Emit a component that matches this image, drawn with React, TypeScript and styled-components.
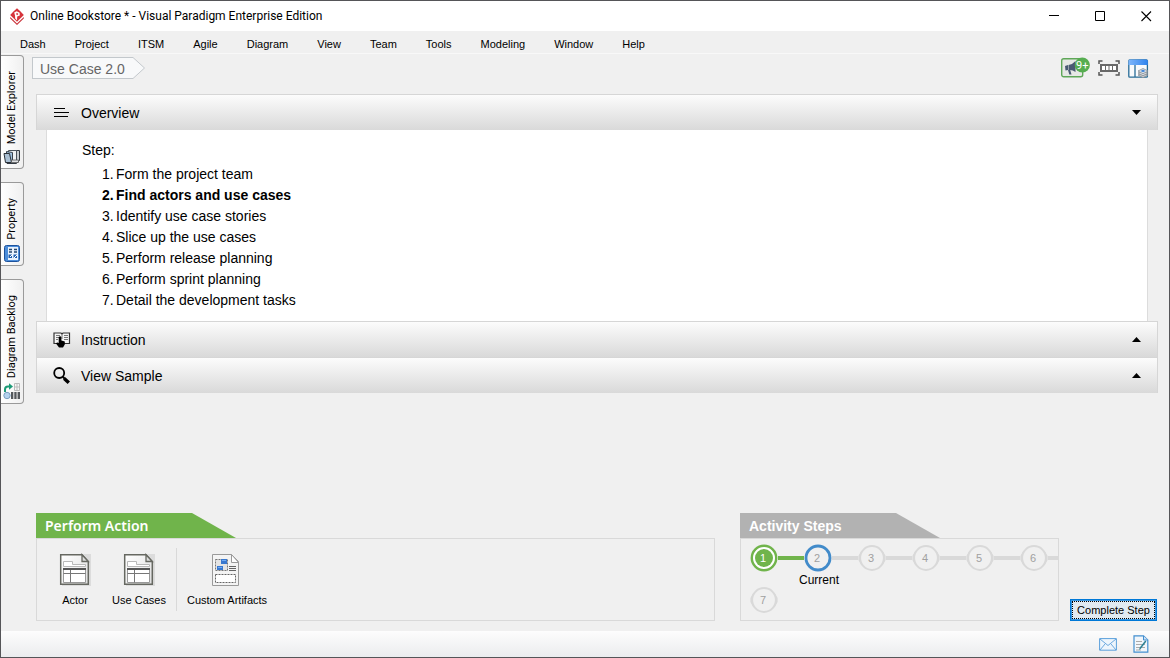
import React, { useState } from "react";
import styled, { createGlobalStyle, css } from "styled-components";

const GlobalStyle = createGlobalStyle`
  *, *::before, *::after { box-sizing: border-box; }
  body {
    margin: 0;
    background: #f0f0f0;
    color: #000;
    font-family: "Liberation Sans", Arial, sans-serif;
    font-size: 11px;
  }
  button { font: inherit; color: inherit; }
  svg { flex: none; }
`;

const Window = styled.div`
  display: flex;
  flex-direction: column;
  min-height: 100vh;
  border: 1px solid #555558;
  background: #f0f0f0;
`;

const TitleBar = styled.header`
  display: flex;
  align-items: center;
  height: 30px;
  padding-left: 8px;
  background: #fff;
`;

const Title = styled.h1`
  flex: 1;
  margin: 0 0 0 5px;
  font: 400 12px/16px Roboto, "Segoe UI", sans-serif;
`;

const WindowButton = styled.button`
  display: grid;
  place-items: center;
  width: 46px;
  height: 28px;
  padding: 0;
  border: 0;
  background: none;
`;

const MenuBar = styled.nav`
  display: flex;
  gap: 29px;
  height: 23px;
  padding-left: 19px;
  border-bottom: 1px solid #f8f8f8;
`;

const MenuItem = styled.button`
  padding: 3px 0 0;
  border: 0;
  background: none;
  line-height: 16px;
`;

const Body = styled.div`
  display: flex;
  flex: 1;
`;

const SideBar = styled.aside`
  display: flex;
  flex-direction: column;
  align-items: flex-start;
  gap: 13px;
  width: 23px;
  padding-top: 1px;
`;

const SideTab = styled.button`
  display: flex;
  flex-direction: column;
  align-items: center;
  gap: 5px;
  width: 23px;
  padding: 15px 2px 3px;
  border: 1px solid #9a9a9a;
  border-left: 0;
  border-radius: 0 4px 4px 0;
  background: linear-gradient(to right, #fff, #f0f0f0);
`;

const SideLabel = styled.span`
  writing-mode: vertical-rl;
  transform: rotate(180deg);
  font: 400 11px/16px Roboto, Tahoma, sans-serif;
`;

const Main = styled.main`
  display: flex;
  flex: 1;
  flex-direction: column;
  min-width: 0;
  padding: 0 11px 10px 12px;
`;

const ToolBar = styled.div`
  display: flex;
  justify-content: space-between;
  height: 40px;
  margin-left: -4px;
  padding: 3px 9px 0 0;
`;

const Crumb = styled.a`
  display: flex;
  height: 22px;
  color: #666;
  font-size: 14px;
  line-height: 22px;
  text-decoration: none;
`;

const CrumbText = styled.span`
  padding: 0 7px;
  border: 1px solid #c3c8cc;
  border-right: 0;
  background: #f8f9fa;
`;

const Tools = styled.div`
  display: flex;
  gap: 8px;
`;

const ToolButton = styled.button`
  display: flex;
  align-items: center;
  height: 24px;
  padding: 0;
  border: 0;
  background: none;
`;

const SectionHeader = styled.button`
  display: flex;
  align-items: center;
  width: 100%;
  height: 36px;
  padding: 0 16px;
  border: 1px solid #d6d6d6;
  border-bottom: 0;
  background: linear-gradient(#fcfcfc, #d9d9d9);
  font-size: 14px;
  text-align: left;
`;

const SectionTitle = styled.span`
  flex: 1;
  padding-left: 10px;
`;

const SectionBody = styled.div`
  margin: 0 10px;
  padding: 10px 35px;
  border: solid #dcdcdc;
  border-width: 0 1px;
  background: #fff;
  font-size: 14px;
  line-height: 21px;
`;

const StepHeading = styled.p`
  margin: 0 0 3px;
`;

const StepNames = styled.ol`
  margin: 0;
  padding: 0 0 0 20px;
  list-style: none;
`;

const StepName = styled.li<{ $current?: boolean }>`
  display: flex;
  font-weight: ${(p) => (p.$current ? 700 : 400)};
`;

const StepIndex = styled.span`
  width: 14px;
`;

const BottomArea = styled.div`
  display: flex;
  align-items: flex-end;
  margin-top: auto;
  padding: 24px 1px 0 0;
`;

const Group = styled.section<{ $grow?: boolean }>`
  min-width: 0;
  ${(p) =>
    p.$grow
      ? css`
          flex: 1;
          margin-right: 25px;
        `
      : css`
          flex: 0 0 319px;
          margin-right: 11px;
        `}
`;

const GroupTab = styled.h2<{ $active?: boolean }>`
  width: 200px;
  height: 25px;
  margin: 0;
  padding-left: 9px;
  clip-path: polygon(0 0, 156px 0, 200px 100%, 0 100%);
  background: ${(p) => (p.$active ? "#70b44b" : "#b2b2b2")};
  color: #fff;
  font: ${(p) =>
    p.$active
      ? '600 14px/25px "Noto Sans", sans-serif'
      : '700 14px/26px "Liberation Sans", sans-serif'};
`;

const GroupBox = styled.div`
  display: flex;
  height: 83px;
  border: 1px solid #d9d9d9;
`;

const Actions = styled(GroupBox)`
  padding: 9px 6px;
`;

const Action = styled.button`
  display: flex;
  flex-direction: column;
  align-items: center;
  gap: 6px;
  min-width: 64px;
  padding: 5px 5px 0;
  border: 0;
  background: none;
  line-height: 14px;
  white-space: nowrap;
`;

const Divider = styled.span`
  width: 1px;
  margin: 0 5px;
  background: #d9d9d9;
`;

const Progress = styled.ol`
  display: grid;
  grid-template-columns: repeat(6, 54px);
  grid-auto-rows: 42px;
  height: 83px;
  margin: 0;
  padding: 5px 0 0 9px;
  overflow: hidden;
  border: 1px solid #d9d9d9;
  list-style: none;
`;

const ProgressStep = styled.li`
  display: flex;
`;

const Marker = styled.div`
  display: flex;
  flex-direction: column;
  align-items: center;
  width: 28px;
`;

const Disc = styled.div`
  display: grid;
  place-items: center;
  flex: none;
  width: 28px;
  height: 28px;

  > * {
    grid-area: 1 / 1;
  }
`;

const Number = styled.span<{ $done?: boolean }>`
  padding-right: 2px;
  color: ${(p) => (p.$done ? "#fff" : "#a0a0a0")};
`;

const Caption = styled.span`
  padding-left: 2px;
  font-size: 12px;
  line-height: 16px;
`;

const Link = styled.span<{ $done?: boolean }>`
  flex: 1;
  height: 4px;
  margin-top: 12px;
  background: ${(p) => (p.$done ? "#70b44b" : "#d9d9d9")};
`;

const CompleteButton = styled.button`
  width: 87px;
  height: 22px;
  padding: 0;
  border: 1px solid #0078d7;
  box-shadow: inset 0 0 0 1px #3c98e0;
  outline: 1px dotted #000;
  outline-offset: -3px;
  background: #e1eaf1;
  white-space: nowrap;
`;

const StatusBar = styled.footer`
  display: flex;
  align-items: center;
  justify-content: flex-end;
  gap: 16px;
  height: 26px;
  padding-right: 20px;
  background: linear-gradient(#fdfdfd, #ebecee);
`;

const StatusButton = styled.button`
  display: flex;
  padding: 0;
  border: 0;
  background: none;
`;

const Logo = () => (
  <svg width="16" height="17" viewBox="0 0 16 17" aria-hidden="true">
    <path d="M8 .3 11.8 3.8 14.8 7 8 13.8 1.2 7 4.2 3.8Z" fill="#d6333a" />
    <path d="M1.2 9 8 15.6 14.8 9V10.4L8 17 1.2 10.4Z" fill="#c92f36" />
    <path d="M5.2 4.6 7.6 3.2 10.6 4.8 10.8 7.6 8.2 8.6 8 12.6 6.2 10.6 6 7.4Z" fill="#fff" />
    <path d="M8 4.8 9.4 6 8.2 7.2 7 6Z" fill="#d6333a" />
  </svg>
);

const ExplorerIcon = () => (
  <svg width="18" height="16" viewBox="0 0 18 16" aria-hidden="true">
    <path d="M7 1.5H16.5V11.5L13.5 14.5H4Z" fill="#c9cdd1" stroke="#333a42" />
    <path d="M5.5 1.5H13.5V11.5H5.5Z" fill="#eef1f4" stroke="#4a525b" />
    <path d="M3.5 2.5 9.5 3.5V12.5L3.5 11Z" fill="#9fc0dd" stroke="#39424c" />
    <path d="M1 4.5H6.5L8.5 13.5H2.5Z" fill="#a9bfd3" stroke="#2b3138" />
    <path d="M8.5 11H15.5V13.5H8.5Z" fill="#dfe2e5" stroke="#555" strokeWidth=".8" />
  </svg>
);

const PropertyIcon = () => (
  <svg width="16" height="17" viewBox="0 0 16 17" aria-hidden="true">
    <rect x=".5" y=".5" width="15" height="16" rx="2" fill="#4c8edb" stroke="#1d529c" />
    <path d="M4 2H14V15H4Z" fill="#e9f2fd" />
    <path d="M5 4.5H8M10 4.5H13M5 7H8M10 7H13" stroke="#24466e" strokeWidth="1.3" />
    <path d="M4.5 9.5H8V13H4.5ZM9.5 9.5H13V13H9.5Z" fill="#2160b0" />
    <path d="m6 12 3-3M10 13l3-3" stroke="#fff" />
  </svg>
);

const BacklogIcon = () => (
  <svg width="18" height="17" viewBox="0 0 18 17" aria-hidden="true">
    <path d="M11.5.5H16.5V7.5H11.5ZM14 .5V7.5M11.5 4H16.5" fill="#f5f5f5" stroke="#bbb" />
    <path d="M2 9V6.5Q2 3.5 5 3.5H7" fill="none" stroke="#1b9a76" strokeWidth="2" />
    <path d="M6 .3 10 3.5 6 6.7Z" fill="#1b9a76" />
    <circle cx="4" cy="12.5" r="3.2" fill="#b4d2ee" stroke="#7d9fc0" />
    <path d="M8 9H10.3V16H8ZM11.3 9H13.6V16H11.3ZM14.6 9H17V16H14.6Z" fill="#55585c" />
  </svg>
);

const AnnounceIcon = () => (
  <svg width="30" height="24" viewBox="0 0 30 24" aria-hidden="true">
    <rect x="1.7" y="1.8" width="21" height="18" rx="2" fill="#e6e8e5" stroke="#5fa758" strokeWidth="1.4" />
    <path d="M5 9 8 8V13L5.5 13.5Z" fill="#4a5a73" />
    <path d="M8.5 8Q12.5 7.5 15.5 4V15Q12.5 12.5 8.5 13Z" fill="#4a5a73" />
    <path d="M8 13 10.2 13 11.5 17.5H9.3Z" fill="#4a5a73" />
    <circle cx="22.3" cy="8" r="7.6" fill="#56ad50" />
    <text x="16" y="12" fontSize="11" fontFamily="Roboto, sans-serif" fill="#fff">9+</text>
  </svg>
);

const FitIcon = () => (
  <svg width="22" height="18" viewBox="0 0 22 18" aria-hidden="true">
    <path d="M1 4V1H4.5M17.5 1H21V4M21 12V15H17.5M4.5 15H1V12" fill="none" stroke="#555" strokeWidth="1.5" />
    <rect x="2" y="4" width="18" height="8" fill="#686868" />
    <path d="M4 6H7V10H4ZM8 6H10.5V10H8ZM11.5 6H14V10H11.5ZM15 6H18V10H15Z" fill="#fff" />
  </svg>
);

const LayoutIcon = () => (
  <svg width="21" height="20" viewBox="0 0 21 20" aria-hidden="true">
    <defs>
      <linearGradient id="layoutTop" x1="0" x2="1">
        <stop stopColor="#7eb6fb" />
        <stop offset="1" stopColor="#2e83ee" />
      </linearGradient>
    </defs>
    <rect x=".8" y="1" width="18.6" height="17.2" rx="1" fill="#f8fafc" stroke="#276c97" strokeWidth="1.3" />
    <path d="M.5 2Q.5.5 2 .5H18Q19.8.5 19.8 2V6H.5Z" fill="url(#layoutTop)" />
    <path d="M7 6V18" stroke="#276c97" strokeWidth="1.3" />
    <path d="m10 16 5 2.7 5-2.7-5-2.2Z" fill="#c7cbd0" stroke="#848a91" strokeWidth=".8" />
    <path d="m10 14 5 2.7 5-2.7-5-2.2Z" fill="#d9dde1" stroke="#848a91" strokeWidth=".8" />
    <path d="m10 12 5 2.7 5-2.7-5-2.5Z" fill="#e3e8ed" stroke="#848a91" strokeWidth=".8" />
    <path d="m12.5 12 2.5 1.2 2.5-1.2L15 10.5Z" fill="#4587d8" />
  </svg>
);

const LinesIcon = () => (
  <svg width="18" height="18" viewBox="0 0 18 18" aria-hidden="true">
    <path d="M1 4.5H12M1 8.5H16M1 12.5H15" stroke="#000" />
  </svg>
);

const InstructionIcon = () => (
  <svg width="18" height="18" viewBox="0 0 18 18" aria-hidden="true">
    <path d="M1 2H8L9 3 10 2H16.5V12.5H1Z" fill="#f5f5f5" stroke="#333" strokeWidth="1.2" />
    <path d="M9 3V8M3 4.5H7M3 6.5H6M3 8.5H5M11 4.5H15M11 6.5H15M11 8.5H15" stroke="#777" />
    <path d="M5.7 6Q7.2 4.5 8.4 6V9.5L11.8 10.5V13.5L10 16.5H6L3 12.5Q4 10.6 5.7 12Z" fill="#000" />
  </svg>
);

const SearchIcon = () => (
  <svg width="18" height="18" viewBox="0 0 18 18" aria-hidden="true">
    <circle cx="6.2" cy="6" r="5" fill="none" stroke="#000" strokeWidth="1.8" />
    <path d="m9.8 9.8 2 2" stroke="#000" strokeWidth="2" />
    <path d="m11.2 11.4 4.6 4.4" stroke="#000" strokeWidth="3.4" />
  </svg>
);

const Arrow = ({ open }: { open?: boolean }) => (
  <svg width="9" height="5" viewBox="0 0 9 5" aria-hidden="true">
    <path d={open ? "M0 0H9L4.5 5Z" : "M0 5H9L4.5 0Z"} fill="#000" />
  </svg>
);

const FormIcon = () => (
  <svg width="32" height="34" viewBox="0 0 32 34" aria-hidden="true">
    <defs>
      <linearGradient id="formSheet" x1="0" x2="1" y2="1">
        <stop stopColor="#fff" />
        <stop offset="1" stopColor="#dedede" />
      </linearGradient>
    </defs>
    <path d="M3 1H32V33H3Z" fill="#dcdcdc" />
    <path d="M1.7 1.7H23L29.3 8.5V31.3H1.7Z" fill="url(#formSheet)" stroke="#666861" strokeWidth="1.5" />
    <path d="M23 1.7V8.5H29.3Z" fill="#ddd" stroke="#666861" strokeWidth="1.3" />
    <path d="M4.5 8.5H13.5V11.5H26.5V13.5H4.5Z" fill="#fff" stroke="#b8b8b8" />
    <path d="M4.5 15.5H26.5V29.5H4.5Z" fill="#fff" stroke="#999" />
    <path d="M4 16H27" stroke="#555" strokeWidth="2" />
    <path d="M4.5 20.5H26.5M11.5 17V29.5" stroke="#777" />
  </svg>
);

const ArtifactIcon = () => (
  <svg width="32" height="34" viewBox="2 0 32 34" aria-hidden="true">
    <path d="M3.5 1.5H22.5L29.5 8.5V32.5H3.5Z" fill="#f4f4f4" stroke="#9a9a9a" />
    <path d="M22.5 1.5V9.5H29.5Z" fill="#fff" stroke="#9a9a9a" />
    <path d="M6.5 6.5H18.5V17.5H6.5Z" fill="#e4e4e4" stroke="#777" strokeDasharray="2 1" />
    <path d="M12 6H18V11H12ZM8 13H14V17H8Z" fill="#3978ce" />
    <path d="M13 7H17V8H13ZM9 14H13V15H9Z" fill="#70aaf3" />
    <path d="M20 13.5H27M20 15.5H27M20 17.5H27" stroke="#666" />
    <path d="M6.5 21.5H26.5V29.5H6.5Z" fill="#fff" stroke="#666" strokeDasharray="2 1" />
  </svg>
);

const MailIcon = () => (
  <svg width="18" height="13" viewBox="0 0 18 13" aria-hidden="true">
    <path d="M.6.6H17.4V12.2H.6Z" fill="#eef5fc" stroke="#5b9fdb" />
    <path d="m1 1 8 6.5L17 1M1 12 6 6M17 12l-5-6" fill="none" stroke="#5b9fdb" strokeWidth=".9" />
  </svg>
);

const NoteIcon = () => (
  <svg width="16" height="18" viewBox="0 0 16 18" aria-hidden="true">
    <path d="M1 .8H10.5L14.8 5V17.2H1Z" fill="#f1f6fb" stroke="#438fd0" strokeWidth="1.2" />
    <path d="M10.5 1V5H14.8" fill="#cfe3f5" stroke="#438fd0" />
    <path d="M3 6.5H9M3 9.5H12M3 12.5H12M3 15H8" stroke="#aaa" />
    <path d="m6 15 .8-2.6 5.4-7L13.4 6.4 8 13.4Z" fill="#2b8093" />
  </svg>
);

type StepState = "done" | "current" | "pending";

const Ring = ({ state }: { state: StepState }) => (
  <svg width="28" height="28" viewBox="0 0 28 28" aria-hidden="true">
    {state === "done" && (
      <>
        <circle cx="14" cy="14" r="12.2" fill="#fff" stroke="#70b44b" strokeWidth="2.4" />
        <circle cx="14" cy="14" r="9" fill="#70b44b" />
      </>
    )}
    {state === "current" && (
      <circle cx="14" cy="14" r="12" fill="#f0f0f0" stroke="#428bca" strokeWidth="2.8" />
    )}
    {state === "pending" && (
      <>
        <path d="M.4 12 3.5 6.5V21.5L.4 16ZM27.6 12 24.5 6.5V21.5L27.6 16Z" fill="#d9d9d9" />
        <circle cx="14" cy="14" r="11.9" fill="#f0f0f0" stroke="#d9d9d9" strokeWidth="2" />
      </>
    )}
  </svg>
);

const menus = ["Dash", "Project", "ITSM", "Agile", "Diagram", "View", "Team", "Tools", "Modeling", "Window", "Help"];

const steps = [
  "Form the project team",
  "Find actors and use cases",
  "Identify use case stories",
  "Slice up the use cases",
  "Perform release planning",
  "Perform sprint planning",
  "Detail the development tasks",
];

const currentStep = 1;

const stateOf = (i: number): StepState =>
  i < currentStep ? "done" : i === currentStep ? "current" : "pending";

export default function App() {
  const [overviewOpen, setOverviewOpen] = useState(true);

  return (
    <>
      <GlobalStyle />
      <Window>
        <TitleBar>
          <Logo />
          <Title>Online Bookstore * - Visual Paradigm Enterprise Edition</Title>
          <WindowButton aria-label="Minimize">
            <svg width="11" height="11"><path d="M0 4.5H10" stroke="#000" /></svg>
          </WindowButton>
          <WindowButton aria-label="Maximize">
            <svg width="11" height="11"><path d="M.5.5H9.5V9.5H.5Z" fill="none" stroke="#000" /></svg>
          </WindowButton>
          <WindowButton aria-label="Close">
            <svg width="11" height="11"><path d="m.5.5 9.5 9.5M10 .5.5 10" stroke="#000" strokeWidth="1.1" /></svg>
          </WindowButton>
        </TitleBar>

        <MenuBar>
          {menus.map((m) => (
            <MenuItem key={m}>{m}</MenuItem>
          ))}
        </MenuBar>

        <Body>
          <SideBar>
            <SideTab><SideLabel>Model Explorer</SideLabel><ExplorerIcon /></SideTab>
            <SideTab><SideLabel>Property</SideLabel><PropertyIcon /></SideTab>
            <SideTab><SideLabel>Diagram Backlog</SideLabel><BacklogIcon /></SideTab>
          </SideBar>

          <Main>
            <ToolBar>
              <Crumb href="#use-case">
                <CrumbText>Use Case 2.0</CrumbText>
                <svg width="13" height="22" viewBox="0 0 13 22" aria-hidden="true">
                  <path d="M0 .5H1L12.5 11 1 21.5H0" fill="#f8f9fa" stroke="#c3c8cc" />
                </svg>
              </Crumb>
              <Tools>
                <ToolButton aria-label="Announcements"><AnnounceIcon /></ToolButton>
                <ToolButton aria-label="Fit"><FitIcon /></ToolButton>
                <ToolButton aria-label="Layout"><LayoutIcon /></ToolButton>
              </Tools>
            </ToolBar>

            <SectionHeader aria-expanded={overviewOpen} onClick={() => setOverviewOpen(!overviewOpen)}>
              <LinesIcon />
              <SectionTitle>Overview</SectionTitle>
              <Arrow open={overviewOpen} />
            </SectionHeader>
            {overviewOpen && (
              <SectionBody>
                <StepHeading>Step:</StepHeading>
                <StepNames>
                  {steps.map((s, i) => (
                    <StepName key={s} $current={i === currentStep}>
                      <StepIndex>{i + 1}.</StepIndex>
                      {s}
                    </StepName>
                  ))}
                </StepNames>
              </SectionBody>
            )}
            <SectionHeader aria-expanded={false}>
              <InstructionIcon />
              <SectionTitle>Instruction</SectionTitle>
              <Arrow />
            </SectionHeader>
            <SectionHeader aria-expanded={false}>
              <SearchIcon />
              <SectionTitle>View Sample</SectionTitle>
              <Arrow />
            </SectionHeader>

            <BottomArea>
              <Group $grow>
                <GroupTab $active>Perform Action</GroupTab>
                <Actions>
                  <Action><FormIcon />Actor</Action>
                  <Action><FormIcon />Use Cases</Action>
                  <Divider />
                  <Action><ArtifactIcon />Custom Artifacts</Action>
                </Actions>
              </Group>
              <Group>
                <GroupTab>Activity Steps</GroupTab>
                <Progress>
                  {steps.map((s, i) => (
                    <ProgressStep key={s}>
                      <Marker>
                        <Disc>
                          <Ring state={stateOf(i)} />
                          <Number $done={i < currentStep}>{i + 1}</Number>
                        </Disc>
                        {i === currentStep && <Caption>Current</Caption>}
                      </Marker>
                      {i < steps.length - 1 && <Link $done={i < currentStep} />}
                    </ProgressStep>
                  ))}
                </Progress>
              </Group>
              <CompleteButton>Complete Step</CompleteButton>
            </BottomArea>
          </Main>
        </Body>

        <StatusBar>
          <StatusButton aria-label="Messages"><MailIcon /></StatusButton>
          <StatusButton aria-label="Notes"><NoteIcon /></StatusButton>
        </StatusBar>
      </Window>
    </>
  );
}
